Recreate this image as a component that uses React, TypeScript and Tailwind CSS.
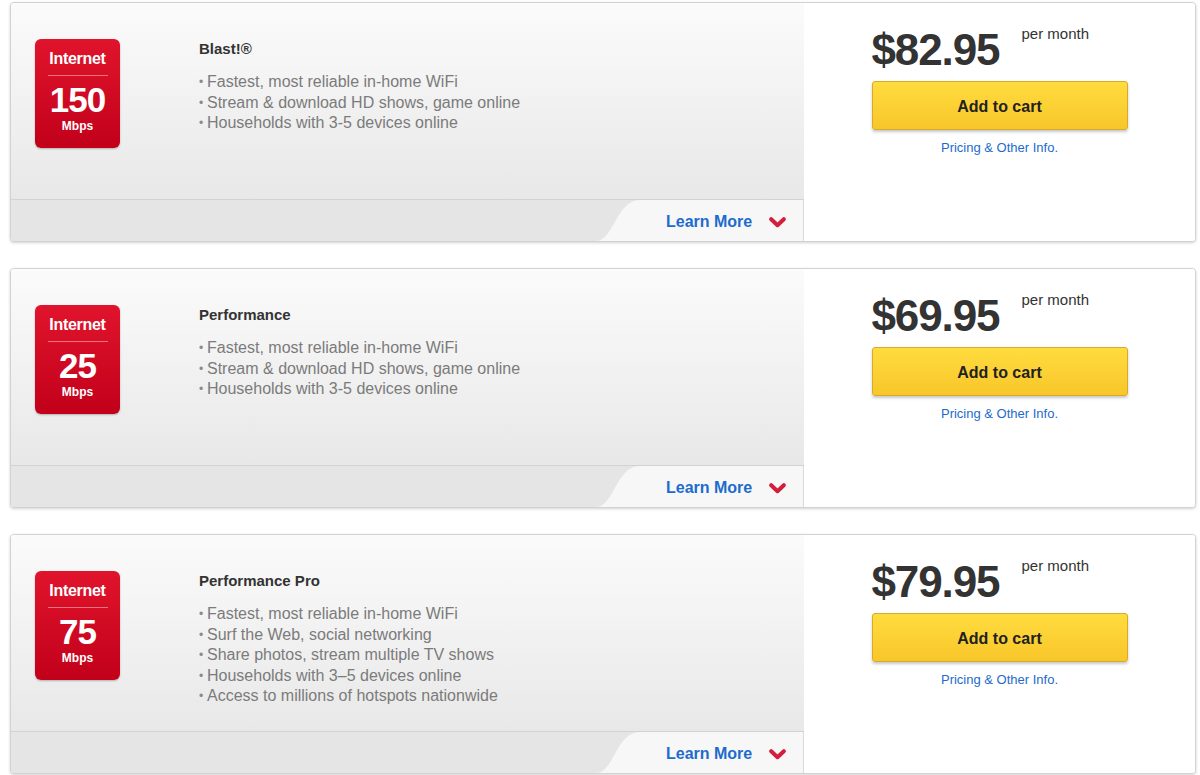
import React from "react";

type Plan = {
  speed: string;
  name: string;
  price: string;
  bullets: string[];
};

const plans: Plan[] = [
  {
    speed: "150",
    name: "Blast!®",
    price: "$82.95",
    bullets: [
      "Fastest, most reliable in-home WiFi",
      "Stream & download HD shows, game online",
      "Households with 3-5 devices online",
    ],
  },
  {
    speed: "25",
    name: "Performance",
    price: "$69.95",
    bullets: [
      "Fastest, most reliable in-home WiFi",
      "Stream & download HD shows, game online",
      "Households with 3-5 devices online",
    ],
  },
  {
    speed: "75",
    name: "Performance Pro",
    price: "$79.95",
    bullets: [
      "Fastest, most reliable in-home WiFi",
      "Surf the Web, social networking",
      "Share photos, stream multiple TV shows",
      "Households with 3–5 devices online",
      "Access to millions of hotspots nationwide",
    ],
  },
];

const SpeedBadge = ({ speed }: { speed: string }) => (
  <div className="w-[85px] h-[109px] shrink-0 rounded-[6px] bg-gradient-to-b from-[#e0142c] to-[#c2001a] shadow-[0_1px_2px_rgba(0,0,0,0.25)] flex flex-col items-center text-white font-bold">
    <div className="mt-[10px] text-[16px] leading-[20px] tracking-[-0.3px]">Internet</div>
    <div className="mt-[6px] w-[60px] h-px bg-[#f07080]" />
    <div className="mt-[6px] text-[35px] leading-[36px] tracking-[-1px]">{speed}</div>
    <div className="mt-[1px] text-[12px] leading-[14px]">Mbps</div>
  </div>
);

const Chevron = () => (
  <svg width="17" height="11" viewBox="0 0 17 11" className="block">
    <path d="M2.2 2.2 L8.5 8.2 L14.8 2.2" fill="none" stroke="#d21f3c" strokeWidth="4" strokeLinecap="round" strokeLinejoin="round" />
  </svg>
);

const PlanCard = ({ plan }: { plan: Plan }) => {
  return (
    <div className="ml-[10px] mr-[4px] h-[240px] flex border border-[#d2d2d2] rounded-[4px] overflow-hidden shadow-[0_1px_3px_rgba(0,0,0,0.18)] bg-white">
      <div className="w-[793px] shrink-0 flex flex-col bg-gradient-to-b from-[#fbfbfb] to-[#e4e4e4]">
        <div className="flex-1 flex pl-[24px] pt-[36px]">
          <SpeedBadge speed={plan.speed} />
          <div className="ml-[79px] pt-[1px]">
            <div className="text-[15px] leading-[18px] font-bold text-[#333]">{plan.name}</div>
            <ul className="mt-[14px] text-[16px] leading-[20.5px] text-[#7b7b7b]">
              {plan.bullets.map((b) => (
                <li key={b} className="flex">
                  <span className="w-[8px] text-[12px] text-[#8a8a8a]">•</span>
                  <span>{b}</span>
                </li>
              ))}
            </ul>
          </div>
        </div>
        <div className="h-[42px] flex border-t border-[#d3d3d3] bg-[#e5e5e5]">
          <div className="flex-1" />
          <svg width="44" height="41" viewBox="0 0 44 41" preserveAspectRatio="none" className="block">
            <path d="M0 41 C 18 41, 20 0, 44 0 L 44 41 Z" fill="#f7f7f7" />
          </svg>
          <div className="w-[164px] bg-[#f7f7f7] border-r border-[#dadada] flex items-center pl-[26px] pt-[3px]">
            <span className="text-[16px] font-bold text-[#1d6bcc]">Learn More</span>
            <span className="ml-[17px] mt-[1px]">
              <Chevron />
            </span>
          </div>
        </div>
      </div>
      <div className="flex-1 bg-white">
        <div className="w-[256px] mx-auto pt-[25px]">
          <div className="flex items-start">
            <span className="text-[44px] leading-[44px] font-bold tracking-[-1.1px] text-[#333]">{plan.price}</span>
            <span className="ml-[22px] -mt-[3px] text-[15px] leading-[18px] text-[#333]">per month</span>
          </div>
          <button
            type="button"
            className="mt-[9px] w-[256px] h-[49px] pt-[3px] rounded-[3px] border border-[#d6aa2a] bg-gradient-to-b from-[#ffdc3e] to-[#f8c62a] shadow-[0_2px_3px_rgba(0,0,0,0.22)] text-[16px] font-bold text-[#222]"
          >
            Add to cart
          </button>
          <div className="mt-[10px] text-center text-[13px] leading-[16px] text-[#1d6bcc]">
            Pricing &amp; Other Info.
          </div>
        </div>
      </div>
    </div>
  );
};

export default function App() {
  return (
    <div className="w-[1200px] h-[775px] bg-white pt-[2px] flex flex-col gap-[26px] font-['Liberation_Sans',Arial,sans-serif] overflow-hidden">
      {plans.map((p) => (
        <PlanCard key={p.name} plan={p} />
      ))}
    </div>
  );
}
